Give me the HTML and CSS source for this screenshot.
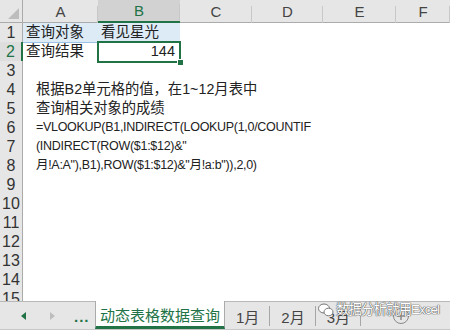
FILE: index.html
```html
<!DOCTYPE html>
<html lang="zh-CN">
<head>
  <meta charset="UTF-8" />
  <title>动态表格数据查询</title>
  <link rel="stylesheet" href="styles.css">
</head>
<body>
  <div class="sheet">
    <div class="colhead">
      <div class="corner">
        <svg width="23" height="23" viewBox="0 0 23 23"><polygon points="19,8 19,19 8,19" fill="#bdbdbd"/></svg>
      </div>
      <div class="ch">A</div>
      <div class="ch sel">B</div>
      <div class="ch">C</div>
      <div class="ch">D</div>
      <div class="ch">E</div>
      <div class="ch">F</div>
    </div>

    <div class="row">
      <div class="rh">1</div>
      <div class="cell fill">查询对象</div>
      <div class="cell fill">看见星光</div>
    </div>
    <div class="row">
      <div class="rh sel">2</div>
      <div class="cell">查询结果</div>
      <div class="cell active">144<span class="handle"></span></div>
    </div>
    <div class="row"><div class="rh">3</div></div>
    <div class="row"><div class="rh">4</div><div class="note">根据B2单元格的值，在1~12月表中</div></div>
    <div class="row"><div class="rh">5</div><div class="note">查询相关对象的成绩</div></div>
    <div class="row"><div class="rh">6</div><div class="note formula">=VLOOKUP(B1,INDIRECT(LOOKUP(1,0/COUNTIF</div></div>
    <div class="row"><div class="rh">7</div><div class="note formula">(INDIRECT(ROW($1:$12)&amp;"</div></div>
    <div class="row"><div class="rh">8</div><div class="note formula">月!A:A"),B1),ROW($1:$12)&amp;"月!a:b")),2,0)</div></div>
    <div class="row"><div class="rh">9</div></div>
    <div class="row"><div class="rh">10</div></div>
    <div class="row"><div class="rh">11</div></div>
    <div class="row"><div class="rh">12</div></div>
    <div class="row"><div class="rh">13</div></div>
    <div class="row"><div class="rh">14</div></div>
    <div class="row"><div class="rh">15</div></div>
  </div>

  <div class="tabbar">
    <div class="nav">
      <span class="tri left"></span>
      <span class="tri right"></span>
      <span class="dots">...</span>
    </div>
    <div class="tab current">动态表格数据查询</div>
    <div class="tab">1月</div>
    <div class="tab">2月</div>
    <div class="tab">3月</div>
    <div class="add">
      <svg width="18" height="18" viewBox="0 0 18 18"><circle cx="9" cy="9" r="7.5" fill="none" stroke="#8a8a8a"/><path d="M9 5v8M5 9h8" stroke="#8a8a8a" stroke-width="1.5"/></svg>
    </div>
    <div class="mark">
      <svg width="16" height="14" viewBox="0 0 16 14"><ellipse cx="6" cy="5.5" rx="5.5" ry="4.5" fill="#fff" stroke="#777"/><ellipse cx="10.5" cy="9" rx="4.5" ry="3.8" fill="#fff" stroke="#777"/></svg>
      <span>数据分析就用Excel</span>
    </div>
  </div>
</body>
</html>
```

FILE: styles.css
```css
body {
  margin: 0;
  width: 450px;
  height: 330px;
  overflow: hidden;
  background: #fff;
  font-family: "Liberation Sans", "Noto Sans CJK SC", sans-serif;
  color: #222;
  position: relative;
}

.sheet { height: 301px; overflow: hidden; }

.colhead, .row {
  display: grid;
  grid-template-columns: 23px 75px 82px 72px 71px 73px 54px;
}
.colhead { height: 23px; background: #e6e6e6; border-bottom: 1px solid #ababab; box-sizing: border-box; }
.corner { border-right: 1px solid #ababab; box-sizing: border-box; height: 22px; }
.corner svg { display: block; }
.ch {
  font-size: 15px;
  line-height: 23px;
  text-align: center;
  color: #444;
  background: linear-gradient(#c8c8c8, #c8c8c8) right bottom / 1px 17px no-repeat;
}
.ch.sel { background-color: #d2d2d2; color: #217346; border-bottom: 2px solid #217346; line-height: 21px; }

.row { height: 19px; position: relative; }
.rh {
  background: #e6e6e6;
  border-right: 1px solid #ababab;
  border-bottom: 1px solid #c8c8c8;
  box-sizing: border-box;
  text-align: center;
  font-size: 16px;
  line-height: 19px;
  color: #333;
}
.rh.sel { color: #217346; border-right: 2px solid #217346; background: #dedede; }

.cell {
  font-size: 14.5px;
  line-height: 19px;
  padding: 0 3px;
  white-space: nowrap;
  box-sizing: border-box;
}
.cell.fill { background: #ddebf7; border-bottom: 1px solid #9bc2e6; }
.cell.active {
  text-align: right;
  position: relative;
  outline: 2px solid #217346;
  outline-offset: -1px;
  padding-right: 5px;
  line-height: 18px;
}
.handle {
  position: absolute;
  right: -4px;
  bottom: -4px;
  width: 5px;
  height: 5px;
  background: #217346;
  border: 1px solid #fff;
}

.note {
  grid-column: 2 / 8;
  padding-left: 13px;
  font-size: 14.3px;
  line-height: 19px;
  white-space: nowrap;
  color: #222;
}
.note.formula { font-size: 12.5px; letter-spacing: -0.3px; }

.tabbar {
  height: 27px;
  background: #e6e6e6;
  border-top: 1px solid #b8b8b8;
  border-bottom: 2px solid #c8c8c8;
  display: flex;
  align-items: stretch;
  font-size: 15px;
  color: #444;
  white-space: nowrap;
}
.nav { width: 95px; flex-shrink: 0; display: flex; align-items: center; }
.tri { width: 0; height: 0; border-top: 4px solid transparent; border-bottom: 4px solid transparent; }
.tri.left { border-right: 5px solid #217346; margin-left: 21px; }
.tri.right { border-left: 5px solid #bdbdbd; margin-left: 24px; }
.dots { color: #217346; font-weight: bold; margin-left: 19px; letter-spacing: 1px; margin-top: 2px; }

.tab {
  padding: 0 10px 0 11px;
  flex-shrink: 0;
  display: flex;
  align-items: center;
  border-right: 1px solid #a6a6a6;
  margin: 4px 0 3px;
}
.tab.current {
  width: 130px;
  padding: 2px 0 0;
  box-sizing: border-box;
  justify-content: center;
  margin: -1px 0 0;
  background: #fff;
  color: #217346;
  border-left: 1px solid #ababab;
  border-right: 1px solid #ababab;
  border-bottom: 3px solid #217346;
}
.add { display: flex; align-items: center; margin-left: 31px; }

.mark {
  position: absolute;
  left: 318px;
  top: 302px;
  display: flex;
  align-items: center;
  gap: 2px;
  font-size: 13.5px;
  line-height: 16px;
  white-space: nowrap;
  color: #fff;
  text-shadow: 0 0 1px #555, 0 0 1px #555, 0 0 1px #555;
  letter-spacing: -1px;
}
```
